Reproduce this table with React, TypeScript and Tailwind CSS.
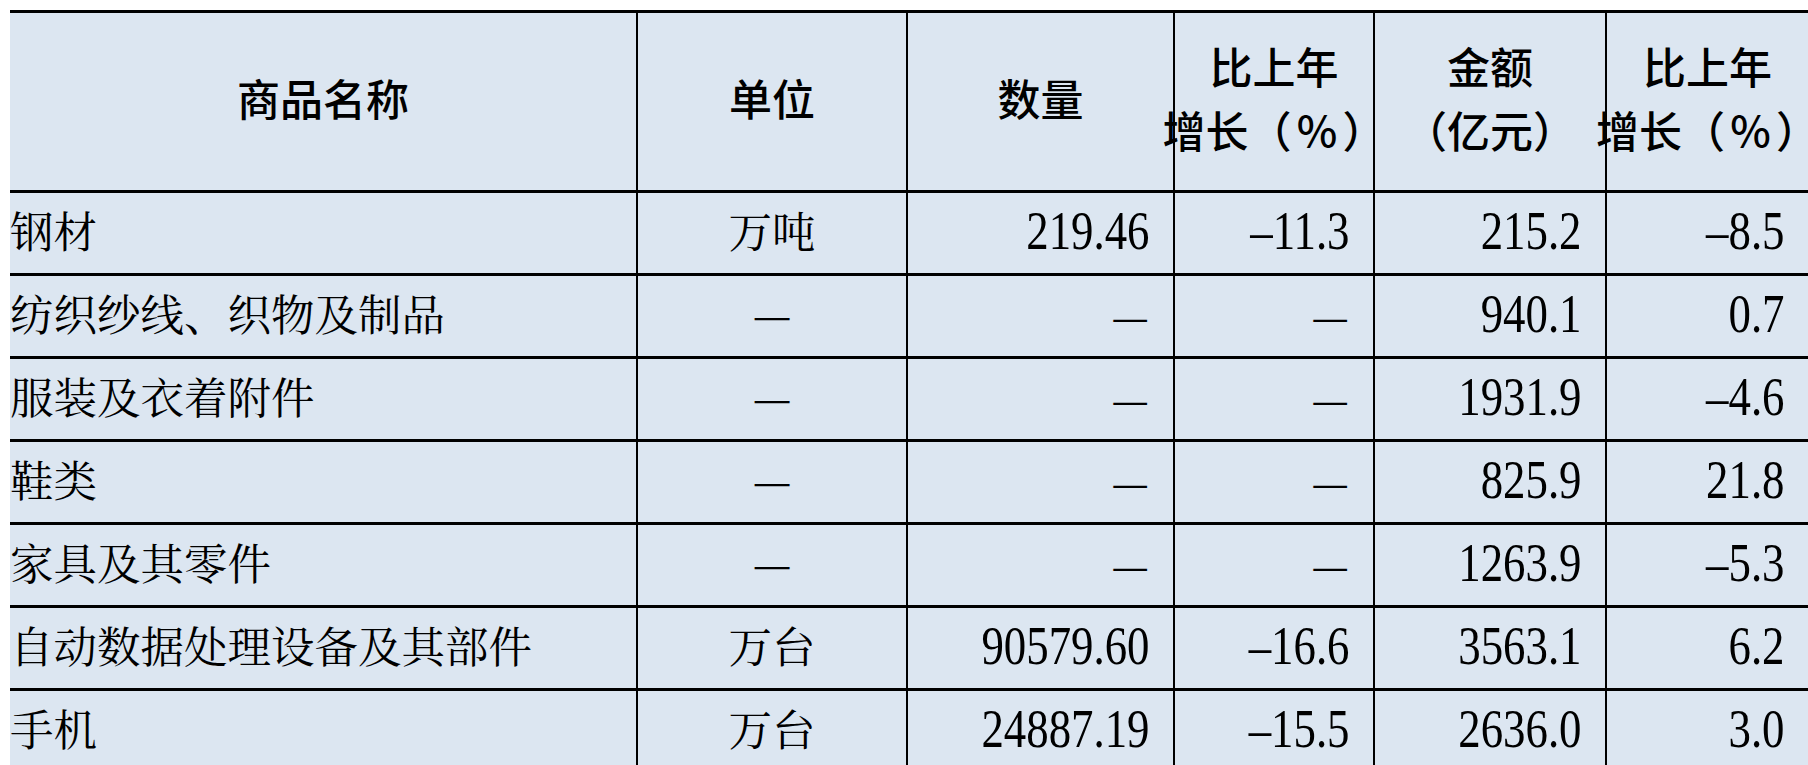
import React from "react";

const SERIF_CJK = '"Noto Serif CJK SC", "Noto Serif SC", "Source Han Serif SC", "AR PL UMing CN", "Noto Sans CJK SC", serif';
const SANS_CJK = '"Noto Sans CJK SC", "Noto Sans", sans-serif';

const rows: string[][] = [
  ["钢材", "万吨", "219.46", "–11.3", "215.2", "–8.5"],
  ["纺织纱线、织物及制品", "—", "—", "—", "940.1", "0.7"],
  ["服装及衣着附件", "—", "—", "—", "1931.9", "–4.6"],
  ["鞋类", "—", "—", "—", "825.9", "21.8"],
  ["家具及其零件", "—", "—", "—", "1263.9", "–5.3"],
  ["自动数据处理设备及其部件", "万台", "90579.60", "–16.6", "3563.1", "6.2"],
  ["手机", "万台", "24887.19", "–15.5", "2636.0", "3.0"],
];

const colW = ["w-[628px]", "w-[270px]", "w-[267px]", "w-[200px]", "w-[232px]", "w-[201px]"];

function NumCell({ v }: { v: string }) {
  if (v === "—") {
    return (
      <span className="text-[42px] leading-none" style={{ fontFamily: SERIF_CJK }}>
        —
      </span>
    );
  }
  return (
    <span
      className="inline-block origin-right scale-x-[0.83] text-[54px] leading-none"
      style={{ fontFamily: '"Liberation Serif", serif' }}
    >
      {v}
    </span>
  );
}

function Growth() {
  return (
    <>
      增长（<span className="mx-[4px]">％</span>）
    </>
  );
}

function HeaderCell({ lines, idx }: { lines: React.ReactNode[]; idx: number }) {
  return (
    <div
      className={`${colW[idx]} h-full shrink-0 flex flex-col items-center justify-center pb-[10px] ${
        idx < 5 ? "border-r-2 border-black" : ""
      }`}
    >
      {lines.map((l, i) => (
        <div key={i} className="whitespace-nowrap text-[43px] leading-[64px] font-medium text-black">
          {l}
        </div>
      ))}
    </div>
  );
}

export default function App() {
  const headers: React.ReactNode[][] = [
    ["商品名称"],
    ["单位"],
    ["数量"],
    ["比上年", <Growth />],
    ["金额", "（亿元）"],
    ["比上年", <Growth />],
  ];
  return (
    <div className="w-[1808px] h-[765px] overflow-hidden bg-white pt-[10px] pl-[10px]">
      <div className="border-t-[3px] border-black bg-[#dce6f1] w-[1798px]" style={{ fontFamily: SANS_CJK }}>
        <div className="flex h-[180px] border-b-[3px] border-black">
          {headers.map((h, i) => (
            <HeaderCell key={i} lines={h} idx={i} />
          ))}
        </div>
        {rows.map((r, ri) => (
          <div key={ri} className="flex h-[83px] border-b-[3px] border-black">
            <div
              className={`${colW[0]} h-full shrink-0 flex items-center pb-[6px] border-r-2 border-black whitespace-nowrap text-[43.5px] leading-none text-black`}
              style={{ fontFamily: SERIF_CJK }}
            >
              {r[0]}
            </div>
            <div
              className={`${colW[1]} h-full shrink-0 flex items-center justify-center pb-[6px] border-r-2 border-black text-[43.5px] leading-none text-black`}
              style={{ fontFamily: SERIF_CJK }}
            >
              {r[1]}
            </div>
            {r.slice(2).map((v, ci) => (
              <div
                key={ci}
                className={`${colW[ci + 2]} h-full shrink-0 flex items-center justify-end pr-[24px] pb-[4px] text-black ${
                  ci + 2 < 5 ? "border-r-2 border-black" : ""
                }`}
              >
                <NumCell v={v} />
              </div>
            ))}
          </div>
        ))}
      </div>
    </div>
  );
}
